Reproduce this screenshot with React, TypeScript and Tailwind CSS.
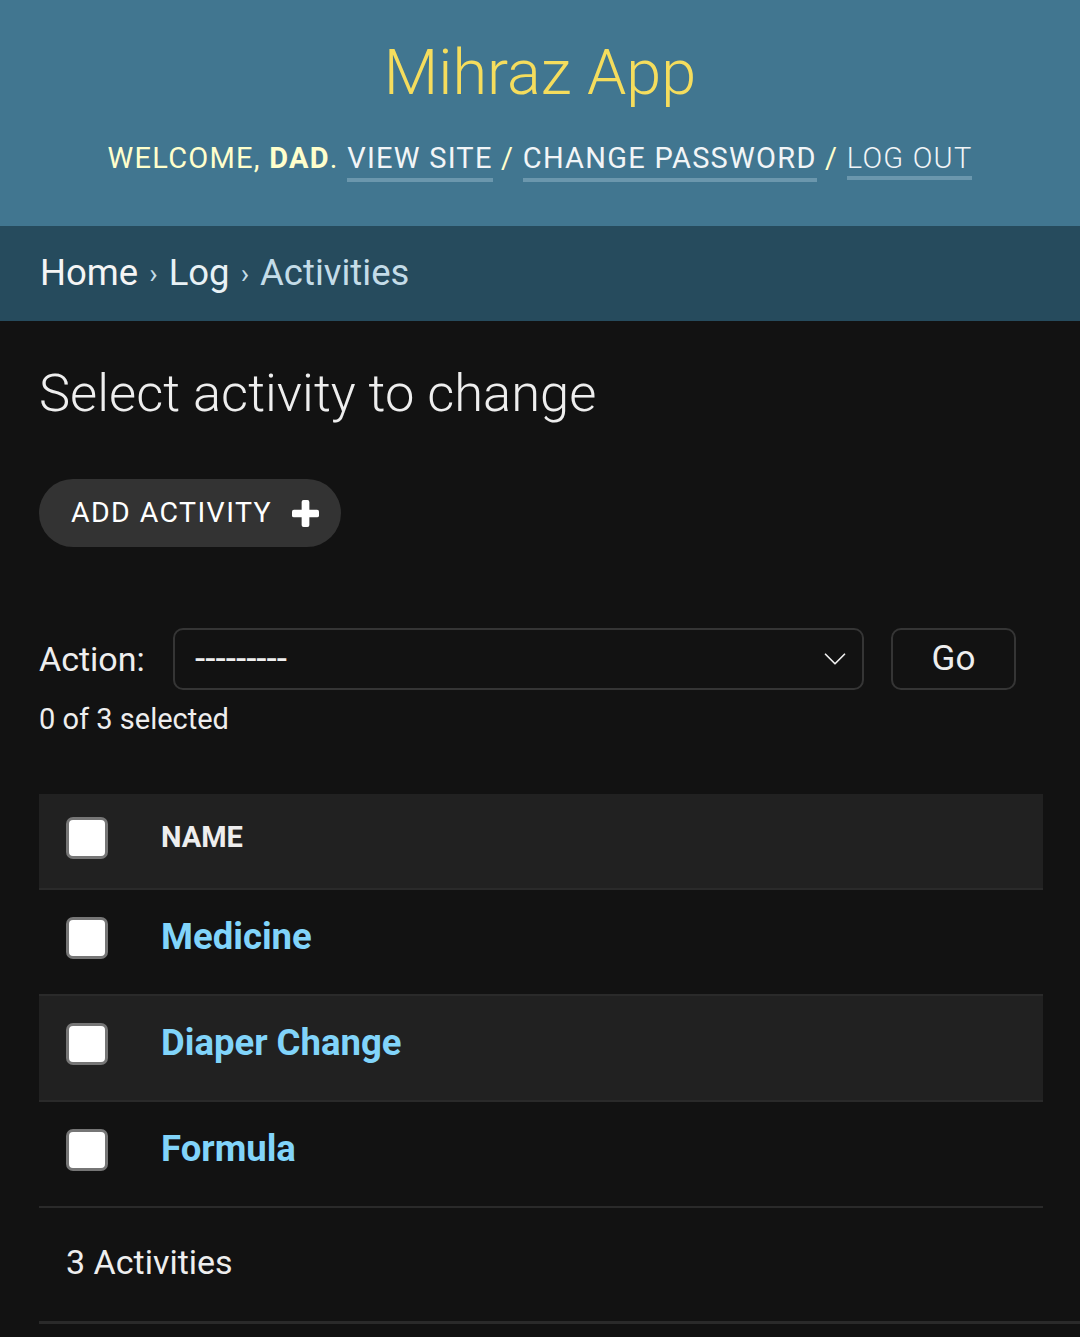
import { ChevronDown } from "lucide-react";

const rows = ["Medicine", "Diaper Change", "Formula"];

function Box() {
    return <span className="block w-[42px] h-[42px] rounded-[7px] bg-white border-[3px] border-[#767676]"></span>
}

export default function App() {
    return (
        <div className="min-h-[1337px] bg-[#121212] text-[#eeeeee] font-['Roboto',sans-serif]">
            <header className="h-[226px] bg-[#417690] flex flex-col items-center">
                <h1 className="mt-[36px] text-[63px] leading-[74px] font-light text-[#f5dd5d]">Mihraz App</h1>
                <div className="mt-[30px] flex items-start text-[29px] leading-[36px] tracking-[1.25px] uppercase text-[#ffffcc]">
                    <span>Welcome, <b className="font-bold">Dad</b>.&nbsp;</span>
                    <span className="text-[#f2f5f7] border-b-[4px] border-[#6b97ad] pb-[2px]">View site</span>
                    <span>&nbsp;/&nbsp;</span>
                    <span className="text-[#f2f5f7] border-b-[4px] border-[#6b97ad] pb-[2px]">Change password</span>
                    <span>&nbsp;/&nbsp;</span>
                    <span className="text-[#f2f5f7] font-light border-b-[4px] border-[#6b97ad]">Log out</span>
                </div>
            </header>
            <nav className="h-[95px] bg-[#264b5d] px-[40px] flex items-center text-[36.5px] text-[#c4dce8]">
                <span className="text-[#f5f5f5]">Home</span>
                <span className="mx-[11px] text-[28px]">›</span>
                <span className="text-[#e8f1f5]">Log</span>
                <span className="mx-[11px] text-[28px]">›</span>
                <span>Activities</span>
            </nav>
            <main className="px-[39px]">
                <h2 className="mt-[42px] text-[52.5px] leading-[60px] font-light text-[#eeeeee]">Select activity to change</h2>
                <button className="mt-[56px] h-[68px] w-[302px] rounded-full bg-[#333333] flex items-center pl-[32px] text-[28.5px] tracking-[1.4px] text-white">
                    ADD ACTIVITY
                    <svg className="ml-[20px]" width="27" height="27" viewBox="0 0 28 28">
                        <rect x="10" y="0" width="8" height="28" rx="2" fill="white" />
                        <rect x="0" y="10" width="28" height="8" rx="2" fill="white" />
                    </svg>
                </button>
                <div className="mt-[81px] flex items-center">
                    <span className="text-[34px] w-[134px]">Action:</span>
                    <div className="w-[691px] h-[62px] rounded-[10px] border-[2px] border-[#353535] flex items-center justify-between pl-[20px] pr-[8px] text-[37px]">
                        <span>---------</span>
                        <ChevronDown size={38} strokeWidth={1.1} />
                    </div>
                    <div className="ml-[27px] w-[125px] h-[62px] rounded-[10px] border-[2px] border-[#353535] flex items-center justify-center text-[35px]">Go</div>
                </div>
                <div className="mt-[8px] text-[29px]">0 of 3 selected</div>
                <div className="mt-[52px] w-[1004px]">
                    <div className="h-[96px] pb-[6px] bg-[#212121] border-b-[2px] border-[#2a2a2a] flex items-center">
                        <div className="w-[122px] pl-[27px]"><Box /></div>
                        <span className="text-[29px] font-bold text-[#eeeeee]">NAME</span>
                    </div>
                    {rows.map((r, i) => (
                        <div key={i} className={`h-[106px] pb-[8px] border-b-[2px] border-[#2a2a2a] flex items-center ${i % 2 === 1 ? 'bg-[#212121]' : ''}`}>
                            <div className="w-[122px] pl-[27px]"><Box /></div>
                            <span className="text-[36.5px] font-bold text-[#81d4fa]">{r}</span>
                        </div>
                    ))}
                    <div className="h-[113px] pb-[4px] flex items-center pl-[27px] text-[34px]">3 Activities</div>
                </div>
            </main>
            <div className="ml-[39px] border-b-[3px] border-[#2a2a2a]"></div>
        </div>
    );
}
